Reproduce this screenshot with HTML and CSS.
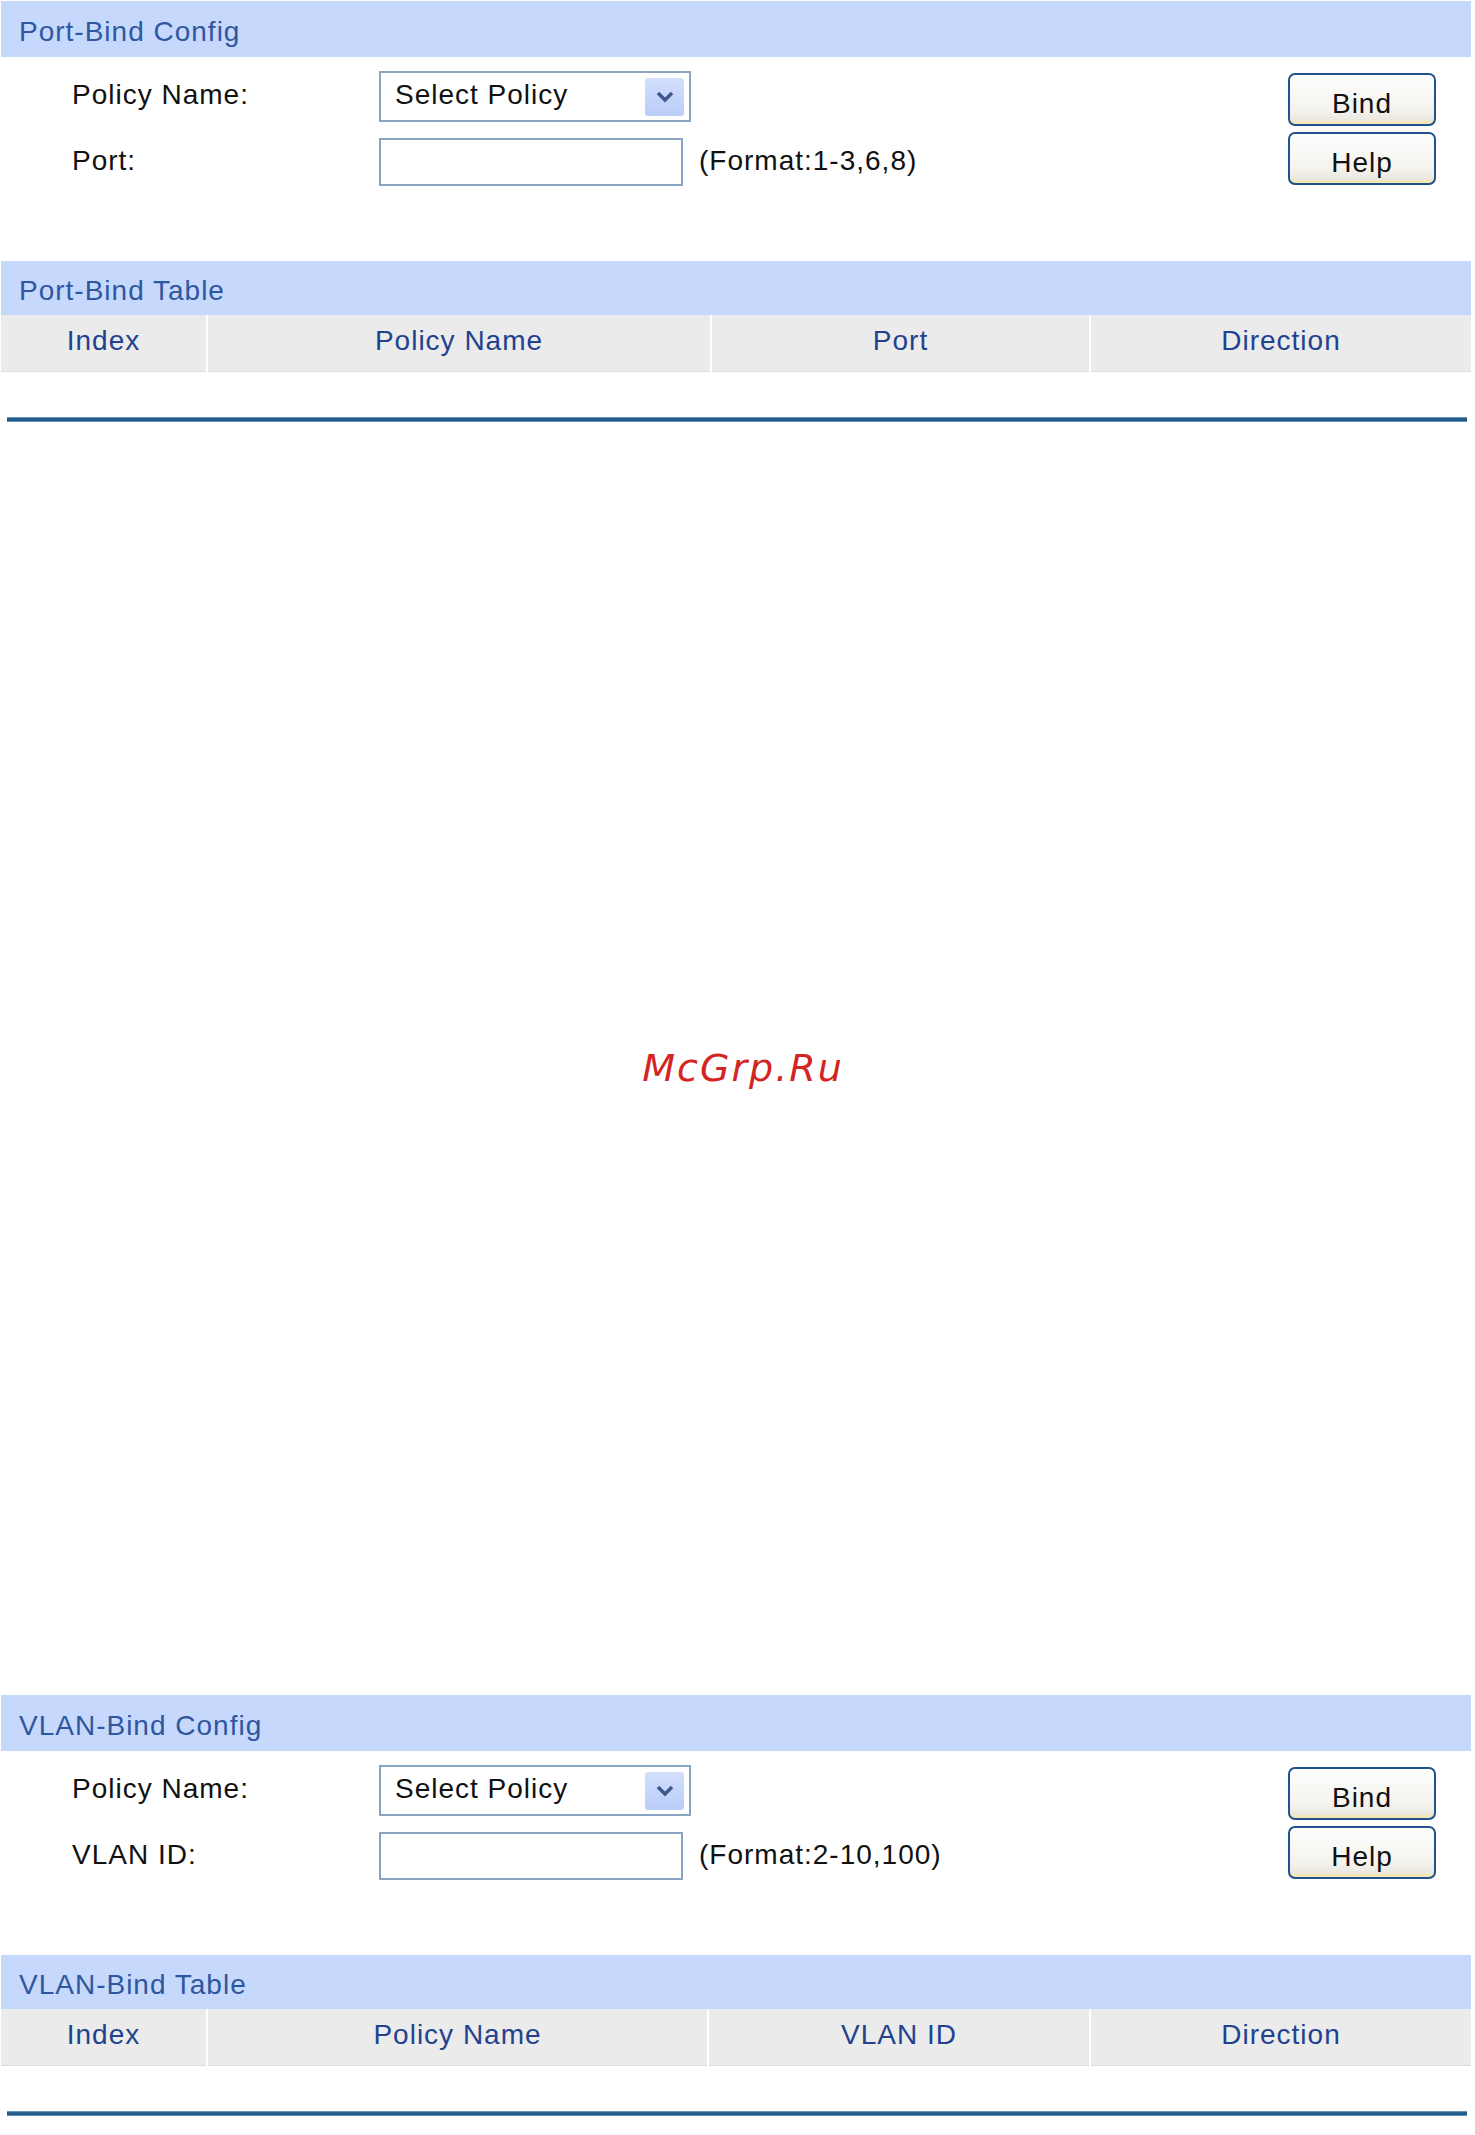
FILE: index.html
```html
<!DOCTYPE html>
<html lang="en">
<head>
  <meta charset="UTF-8">
  <title>Policy Binding</title>
  <link rel="stylesheet" href="styles.css">
</head>
<body>
  <div class="page">

    <!-- port binding -->
    <div class="group">
      <div class="panel-title">Port-Bind Config</div>
      <form class="config">
        <div class="fields">
          <label class="field-label">Policy Name:</label>
          <div class="select">
            <span class="select-text">Select Policy</span>
            <span class="select-arrow">
              <svg width="20" height="13" viewBox="0 0 20 13"><path d="M3 3 L10 10 L17 3" fill="none" stroke="#3f578a" stroke-width="3.5"/></svg>
            </span>
          </div>
          <span></span>
          <label class="field-label">Port:</label>
          <input type="text" class="text-input">
          <span class="hint">(Format:1-3,6,8)</span>
        </div>
        <div class="actions">
          <button type="button" class="btn">Bind</button>
          <button type="button" class="btn">Help</button>
        </div>
      </form>

      <div class="panel-title table-title">Port-Bind Table</div>
      <table class="bind-table">
        <colgroup>
          <col style="width: 206px">
          <col style="width: 504px">
          <col style="width: 379px">
          <col>
        </colgroup>
        <thead>
          <tr>
            <th>Index</th>
            <th>Policy Name</th>
            <th>Port</th>
            <th>Direction</th>
          </tr>
        </thead>
      </table>
      <div class="empty-row"></div>
      <div class="rule"></div>
    </div>

    <div class="spacer">
      <span class="watermark">McGrp.Ru</span>
    </div>

    <!-- vlan binding -->
    <div class="group">
      <div class="panel-title">VLAN-Bind Config</div>
      <form class="config">
        <div class="fields">
          <label class="field-label">Policy Name:</label>
          <div class="select">
            <span class="select-text">Select Policy</span>
            <span class="select-arrow">
              <svg width="20" height="13" viewBox="0 0 20 13"><path d="M3 3 L10 10 L17 3" fill="none" stroke="#3f578a" stroke-width="3.5"/></svg>
            </span>
          </div>
          <span></span>
          <label class="field-label">VLAN ID:</label>
          <input type="text" class="text-input">
          <span class="hint">(Format:2-10,100)</span>
        </div>
        <div class="actions">
          <button type="button" class="btn">Bind</button>
          <button type="button" class="btn">Help</button>
        </div>
      </form>

      <div class="panel-title table-title">VLAN-Bind Table</div>
      <table class="bind-table">
        <colgroup>
          <col style="width: 206px">
          <col style="width: 501px">
          <col style="width: 382px">
          <col>
        </colgroup>
        <thead>
          <tr>
            <th>Index</th>
            <th>Policy Name</th>
            <th>VLAN ID</th>
            <th>Direction</th>
          </tr>
        </thead>
      </table>
      <div class="empty-row"></div>
      <div class="rule"></div>
    </div>

  </div>
</body>
</html>
```

FILE: styles.css
```css
body {
  margin: 0;
  padding: 0;
  background: #ffffff;
  font-family: "Liberation Sans", Arial, sans-serif;
  font-size: 28px;
  letter-spacing: 1px;
  color: #111111;
}

.page {
  padding: 1px 4px 0 1px;
}

.panel-title {
  height: 56px;
  display: flex;
  align-items: center;
  box-sizing: border-box;
  padding: 5px 0 0 18px;
  background: #c6d9fd;
  color: #2f57a0;
}

.table-title {
  height: 54px;
}

/* form area under each config title */
.config {
  display: flex;
  align-items: flex-start;
  height: 204px;
  box-sizing: border-box;
  padding: 14px 35px 0 71px;
  margin: 0;
}

.fields {
  display: grid;
  grid-template-columns: 307px 312px auto;
  row-gap: 16px;
  align-items: center;
}

.field-label {
  color: #111111;
  margin-top: -3px;
}

.select {
  display: flex;
  align-items: center;
  justify-content: space-between;
  width: 312px;
  height: 51px;
  box-sizing: border-box;
  border: 2px solid #8aa4c2;
  padding: 0 5px 0 14px;
  background: #ffffff;
}

.select-text {
  margin-top: -3px;
}

.select-arrow {
  display: flex;
  align-items: center;
  justify-content: center;
  width: 39px;
  height: 38px;
  border-radius: 3px;
  background: linear-gradient(#d3e0fd, #b9cdf8);
}

.text-input {
  width: 304px;
  height: 48px;
  box-sizing: border-box;
  border: 2px solid #8aa4c2;
  margin: 0;
  padding: 0 10px;
  font: inherit;
  background: #ffffff;
}

.hint {
  padding-left: 8px;
  white-space: nowrap;
  margin-top: -2px;
}

.actions {
  margin-left: auto;
  margin-top: 2px;
  display: flex;
  flex-direction: column;
  gap: 6px;
}

.btn {
  width: 148px;
  height: 53px;
  border: 2px solid #21528c;
  border-radius: 7px;
  background: linear-gradient(#fefefe, #f4f3ee 70%, #e6e4da);
  box-shadow: inset 0 -6px 0 -3px #f3e7b8;
  font-family: inherit;
  font-size: 28px;
  letter-spacing: 1px;
  color: #111111;
  padding: 9px 0 0;
  cursor: pointer;
}

.bind-table {
  width: 100%;
  border-collapse: collapse;
  table-layout: fixed;
}

.bind-table th {
  height: 56px;
  padding: 0;
  line-height: 52px;
  vertical-align: top;
  background: #ebebeb;
  color: #22428f;
  font-weight: normal;
  text-align: center;
  border-left: 2px solid #ffffff;
  border-bottom: 1px solid #dddddd;
}

.bind-table th:first-child {
  border-left: none;
}

.empty-row {
  height: 45px;
}

.rule {
  height: 5px;
  margin: 0 4px 0 6px;
  background: linear-gradient(#86a9c9, #25608f 30%, #1f5a8b 70%, #86a9c9);
}

.spacer {
  height: 1273px;
  box-sizing: border-box;
  display: flex;
  justify-content: center;
  padding-top: 624px;
  padding-left: 14px;
}

.watermark {
  font-family: "DejaVu Sans", sans-serif;
  font-style: italic;
  font-size: 38px;
  letter-spacing: 2px;
  color: #d42424;
}
```
